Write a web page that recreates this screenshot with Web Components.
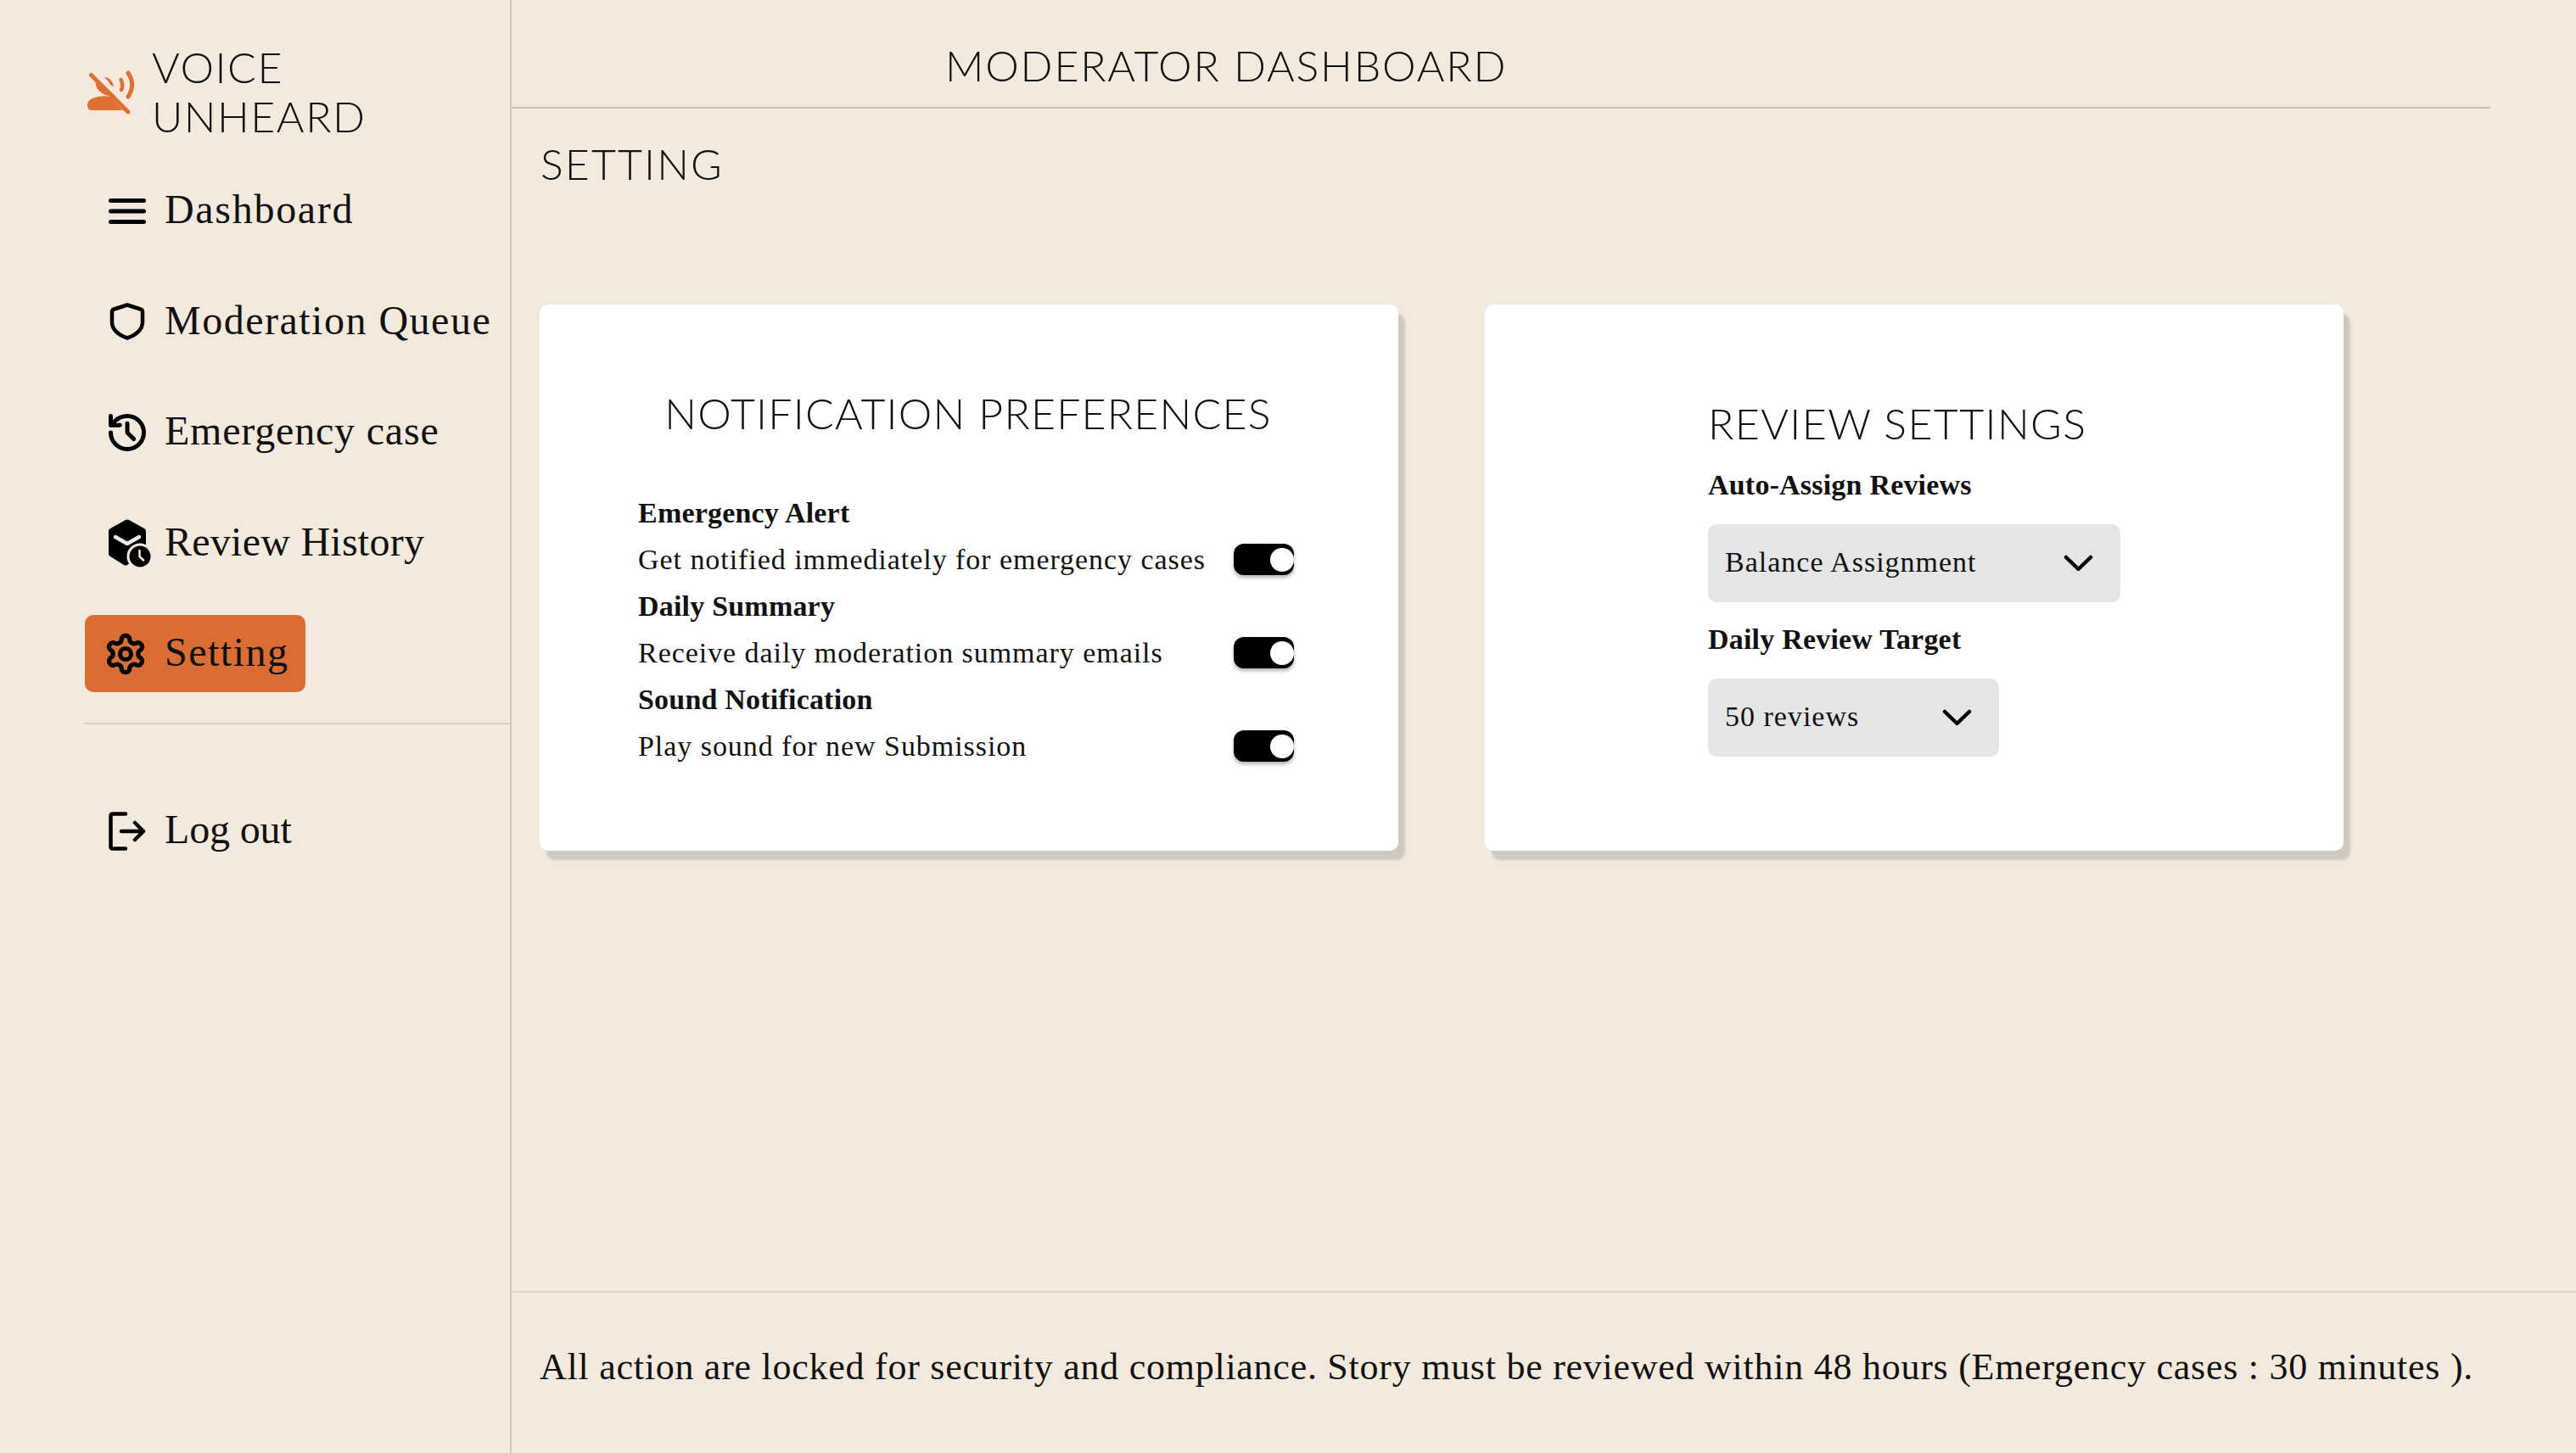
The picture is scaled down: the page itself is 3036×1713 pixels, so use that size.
<!DOCTYPE html>
<html>
<head>
<meta charset="utf-8">
<title>Moderator Dashboard</title>
<style>
  html, body { margin: 0; height: 100%; background: #f3e9dd; overflow: hidden; }
  body { color: #111; font-family: "Liberation Serif", serif; }
</style>
</head>
<body>
<mod-app>
  <mod-sidebar slot="side">
    <mod-logo slot="logo"></mod-logo>
    <nav-item label="Dashboard" style="letter-spacing:1.7px">
      <svg viewBox="0 0 44 30" width="44" height="30"><g stroke="#000" stroke-width="5" stroke-linecap="round"><path d="M2.5 2.5h39M2.5 15h39M2.5 27.500h39"/></g></svg>
    </nav-item>
    <nav-item label="Moderation Queue">
      <svg viewBox="0 0 44 44" width="44" height="44"><path d="M22 2.500 37.500 7.500C39 8 40 9 40 10.500V23C40 31 33 38 22 41.500 11 38 4 31 4 23V10.500C4 9 5 8 6.500 7.500Z" fill="none" stroke="#000" stroke-width="4.500" stroke-linejoin="round"/></svg>
    </nav-item>
    <nav-item label="Emergency case" style="letter-spacing:.8px">
      <svg viewBox="0 0 24 24" width="52" height="52" fill="none" stroke="#000" stroke-width="2.300" stroke-linecap="round" stroke-linejoin="round" style="margin:0 -4px"><path d="M3 12a9 9 0 1 0 9-9 9.750 9.750 0 0 0-6.740 2.740L3 8"/><path d="M3 3v5h5"/><path d="M12 7v5l3.500 3.500"/></svg>
    </nav-item>
    <nav-item label="Review History" style="letter-spacing:.25px">
      <svg viewBox="0 0 50 56" width="50" height="56" style="overflow:visible;margin-right:-6px"><path d="M20 1 Q22 0 24 1L42 11Q44 12 44 14V36Q44 38 42 39L22 54Q20 55 18 54L2 44Q0 43 0 41V14Q0 12 2 11Z" fill="#000"/><path d="M8 21 22 29 36 21" fill="none" stroke="#f3e9dd" stroke-width="4.500" stroke-linecap="round" stroke-linejoin="round"/><circle cx="37" cy="44" r="15.500" fill="#f3e9dd"/><circle cx="37" cy="44" r="12.500" fill="#000"/><path d="M36.500 37v7l4.500 4.500" fill="none" stroke="#f3e9dd" stroke-width="2.500" stroke-linecap="round"/></svg>
    </nav-item>
    <nav-item label="Setting" active style="padding-right:19px">
      <svg viewBox="0 0 24 24" width="52" height="52" fill="none" stroke="#000" stroke-width="2.400" stroke-linecap="round" stroke-linejoin="round" style="margin:0 -4px 0 -6px"><path d="M12.220 2h-.44a2 2 0 0 0-2 2v.18a2 2 0 0 1-1 1.730l-.43.25a2 2 0 0 1-2 0l-.15-.08a2 2 0 0 0-2.730.73l-.22.38a2 2 0 0 0 .73 2.730l.15.1a2 2 0 0 1 1 1.720v.51a2 2 0 0 1-1 1.740l-.15.09a2 2 0 0 0-.73 2.730l.22.38a2 2 0 0 0 2.730.73l.15-.08a2 2 0 0 1 2 0l.43.25a2 2 0 0 1 1 1.730V20a2 2 0 0 0 2 2h.44a2 2 0 0 0 2-2v-.18a2 2 0 0 1 1-1.730l.43-.25a2 2 0 0 1 2 0l.15.08a2 2 0 0 0 2.730-.73l.22-.39a2 2 0 0 0-.73-2.730l-.15-.08a2 2 0 0 1-1-1.740v-.5a2 2 0 0 1 1-1.740l.15-.09a2 2 0 0 0 .73-2.730l-.22-.38a2 2 0 0 0-2.730-.73l-.15.08a2 2 0 0 1-2 0l-.43-.25a2 2 0 0 1-1-1.730V4a2 2 0 0 0-2-2z"/><circle cx="12" cy="12" r="3"/></svg>
    </nav-item>
    <nav-item slot="bottom" label="Log out" style="letter-spacing:-.15px">
      <svg viewBox="0 0 44 46" width="44" height="46" fill="none" stroke="#000" stroke-width="4.500" stroke-linecap="round" stroke-linejoin="round"><path d="M20 2.500H5Q2.500 2.500 2.500 5V41Q2.500 43.500 5 43.500H20"/><path d="M15 23H41M31 13 41 23 31 33"/></svg>
    </nav-item>
  </mod-sidebar>

  <mod-header slot="header">MODERATOR DASHBOARD</mod-header>
  <page-title slot="main">SETTING</page-title>
  <card-row slot="main">
    <notif-card heading="NOTIFICATION PREFERENCES">
      <pref-row heading="Emergency Alert" text="Get notified immediately for emergency cases"></pref-row>
      <pref-row heading="Daily Summary" text="Receive daily moderation summary emails"></pref-row>
      <pref-row heading="Sound Notification" text="Play sound for new Submission"></pref-row>
    </notif-card>
    <review-card heading="REVIEW SETTINGS">
      <select-field label="Auto-Assign Reviews" value="Balance Assignment" width="486"></select-field>
      <select-field label="Daily Review Target" value="50 reviews" width="343"></select-field>
    </review-card>
  </card-row>
  <mod-footer slot="footer">All action are locked for security and compliance. Story must be reviewed within 48 hours (Emergency cases : 30 minutes ).</mod-footer>
</mod-app>

<script>
const DISPLAY = '"Lato", sans-serif';

class ModApp extends HTMLElement {
  constructor() {
    super();
    this.attachShadow({ mode: "open" }).innerHTML = `<style>
  :host { display: flex; width: 3036px; height: 1713px; }
  #main { flex: 1; min-width: 0; display: flex; flex-direction: column; }
  #body { flex: 1; padding-left: 33px; }
</style>
<slot name="side"></slot>
<div id="main">
  <slot name="header"></slot>
  <div id="body"><slot name="main"></slot></div>
  <slot name="footer"></slot>
</div>`;
  }
}

class ModSidebar extends HTMLElement {
  constructor() {
    super();
    this.attachShadow({ mode: "open" }).innerHTML = `<style>
  :host { display: flex; flex-direction: column; box-sizing: border-box; width: 603px; padding: 50px 0 0 100px; border-right: 2px solid #cfc8bd; }
  #nav { display: flex; flex-direction: column; align-items: flex-start; gap: 39.5px; margin-top: 37px; }
  hr { margin: 36px 0 80px; border: 0; border-top: 2px solid #d9d1c6; width: 100%; }
</style>
<slot name="logo"></slot>
<div id="nav"><slot></slot></div>
<hr>
<slot name="bottom"></slot>`;
  }
}

class ModLogo extends HTMLElement {
  constructor() {
    super();
    this.attachShadow({ mode: "open" }).innerHTML = `<style>
  :host { display: flex; align-items: center; height: 116px; gap: 18px; }
  svg { flex: none; margin-left: 1px; }
  div { font: 300 50px/58px ${DISPLAY}; letter-spacing: 1.500px; color: #111; }
</style>
<svg viewBox="0 0 60 56" width="60" height="56">
  <g fill="#dd7033">
    <path d="M8 50C3 50 2 47 2 44 2 38 8 35 15 34 20 33 25 33 29 34L44 50Z"/>
    <path d="M12 16C16 17 21 20 25 24L36 34 27 33C22 32 17 29 14 25 12 22 11 18 12 16Z"/>
    <path d="M22 11C27 11 32 15 33 22L29 20C28 17 25 14 22 11Z"/>
  </g>
  <g fill="none" stroke="#dd7033" stroke-linecap="round">
    <path d="M6.500 8.500 50 52" stroke-width="5"/>
    <path d="M41.500 14C44 19 44 22 42 26" stroke-width="4.500"/>
    <path d="M50 6C56 15 56 25 50 34" stroke-width="5"/>
  </g>
</svg>
<div>VOICE<br>UNHEARD</div>`;
  }
}

class NavItem extends HTMLElement {
  constructor() {
    super();
    this.attachShadow({ mode: "open" }).innerHTML = `<style>
  :host { display: flex; align-items: center; height: 91px; padding: 0 20px 0 28px; border-radius: 10px; font-size: 48px; letter-spacing: 1.500px; color: #111; }
  :host([active]) { background: #d96d33; }
  #icon { flex: none; width: 44px; display: flex; margin-right: 22px; }
  span { position: relative; top: -2px; }
</style>
<div id="icon"><slot></slot></div>
<span></span>`;
    this.shadowRoot.querySelector("span").textContent = this.getAttribute("label");
  }
}

class ModHeader extends HTMLElement {
  constructor() {
    super();
    this.attachShadow({ mode: "open" }).innerHTML = `<style>
  :host { display: flex; align-items: center; box-sizing: border-box; height: 128px; margin-right: 101px; padding: 28px 0 0 511px; border-bottom: 2px solid #c9c1b5; font: 300 50px ${DISPLAY}; letter-spacing: 1.800px; color: #111; }
</style>
<slot></slot>`;
  }
}

class PageTitle extends HTMLElement {
  constructor() {
    super();
    this.attachShadow({ mode: "open" }).innerHTML = `<style>
  :host { display: block; height: 50px; margin: 40px 0 0 1px; font: 300 50px/50px ${DISPLAY}; letter-spacing: 2.100px; color: #111; }
</style>
<slot></slot>`;
  }
}

class CardRow extends HTMLElement {
  constructor() {
    super();
    this.attachShadow({ mode: "open" }).innerHTML = `<style>
  :host { display: flex; gap: 102px; margin-top: 141px; }
</style>
<slot></slot>`;
  }
}

const CARD_CSS = `
  :host { display: block; box-sizing: border-box; width: 1012px; height: 644px; background: #fff; border-radius: 10px; box-shadow: 8px 11px 3px #d0c8bd; }
  h2 { margin: 0; font: 300 50px/60px ${DISPLAY}; color: #111; }
`;

class NotifCard extends HTMLElement {
  constructor() {
    super();
    this.attachShadow({ mode: "open" }).innerHTML = `<style>${CARD_CSS}
  :host { padding: 98px 123px 0 116px; }
  h2 { text-align: center; margin-bottom: 60px; padding-left: 5px; letter-spacing: 1.200px; }
</style>
<h2></h2>
<slot></slot>`;
    this.shadowRoot.querySelector("h2").textContent = this.getAttribute("heading");
  }
}

class ReviewCard extends HTMLElement {
  constructor() {
    super();
    this.attachShadow({ mode: "open" }).innerHTML = `<style>${CARD_CSS}
  :host { padding: 110px 0 0 263px; }
  h2 { margin: 0 0 15px 0; letter-spacing: 1.400px; }
</style>
<h2></h2>
<slot></slot>`;
    this.shadowRoot.querySelector("h2").textContent = this.getAttribute("heading");
  }
}

class PrefRow extends HTMLElement {
  constructor() {
    super();
    this.attachShadow({ mode: "open" }).innerHTML = `<style>
  :host { display: block; font-size: 34px; line-height: 55px; color: #111; }
  b { display: block; letter-spacing: .2px; }
  span { letter-spacing: .95px; }
  #row { display: flex; align-items: center; justify-content: space-between; }
</style>
<b></b>
<div id="row"><span></span><toggle-switch></toggle-switch></div>`;
    this.shadowRoot.querySelector("b").textContent = this.getAttribute("heading");
    this.shadowRoot.querySelector("span").textContent = this.getAttribute("text");
  }
}

class ToggleSwitch extends HTMLElement {
  constructor() {
    super();
    this.attachShadow({ mode: "open" }).innerHTML = `<style>
  :host { display: flex; align-items: center; justify-content: flex-end; flex: none; width: 71px; height: 37px; background: #000; border-radius: 12px; box-shadow: 0 3px 4px rgba(0,0,0,.3); }
  i { display: block; width: 28px; height: 28px; background: #fff; border-radius: 50%; }
</style>
<i></i>`;
  }
}

class SelectField extends HTMLElement {
  constructor() {
    super();
    this.attachShadow({ mode: "open" }).innerHTML = `<style>
  :host { display: block; font-size: 34px; color: #111; }
  label { display: block; font-weight: bold; line-height: 55px; margin-bottom: 19px; letter-spacing: .2px; }
  #box { display: flex; align-items: center; justify-content: space-between; box-sizing: border-box; height: 92px; padding: 0 32px 2px 20px; background: #e5e5e5; border-radius: 10px; letter-spacing: 1px; }
  svg { flex: none; position: relative; top: 1px; }
  :host(:not(:last-of-type)) { margin-bottom: 16px; }
</style>
<label></label>
<div id="box"><span></span>
  <svg viewBox="0 0 35 20" width="35" height="20"><path d="M3 3 17.500 17 32 3" fill="none" stroke="#000" stroke-width="4.500" stroke-linecap="round" stroke-linejoin="round"/></svg>
</div>`;
    this.shadowRoot.querySelector("label").textContent = this.getAttribute("label");
    this.shadowRoot.querySelector("span").textContent = this.getAttribute("value");
    this.shadowRoot.querySelector("#box").style.width = this.getAttribute("width") + "px";
  }
}

class ModFooter extends HTMLElement {
  constructor() {
    super();
    this.attachShadow({ mode: "open" }).innerHTML = `<style>
  :host { display: flex; align-items: center; box-sizing: border-box; height: 191px; padding: 0 0 14px 33px; border-top: 2px solid #dcd5ca; font-size: 44px; letter-spacing: .74px; color: #111; white-space: nowrap; }
</style>
<slot></slot>`;
  }
}

customElements.define("mod-app", ModApp);
customElements.define("mod-sidebar", ModSidebar);
customElements.define("mod-logo", ModLogo);
customElements.define("nav-item", NavItem);
customElements.define("mod-header", ModHeader);
customElements.define("page-title", PageTitle);
customElements.define("card-row", CardRow);
customElements.define("notif-card", NotifCard);
customElements.define("review-card", ReviewCard);
customElements.define("pref-row", PrefRow);
customElements.define("toggle-switch", ToggleSwitch);
customElements.define("select-field", SelectField);
customElements.define("mod-footer", ModFooter);
</script>
</body>
</html>
